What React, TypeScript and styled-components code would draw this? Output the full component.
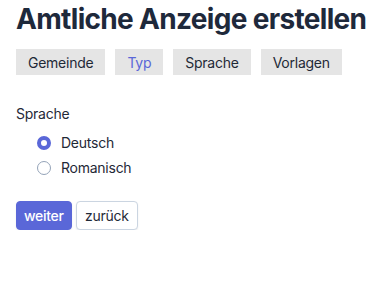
import React, { useState } from "react";
import styled, { createGlobalStyle } from "styled-components";

const Global = createGlobalStyle`
  html, body { margin: 0; padding: 0; background: #ffffff; }
  body { font-family: Inter, "Noto Sans", sans-serif; color: #1f2937; }
`;

const Page = styled.div`
  padding: 2px 16px 0;
  display: flex;
  flex-direction: column;
`;

const Title = styled.h1`
  margin: 0;
  font-size: 28px;
  font-weight: 700;
  line-height: 34px;
  color: #1e293b;
  letter-spacing: -0.68px;
  white-space: nowrap;
`;

const Tabs = styled.div`
  display: flex;
  gap: 10px;
  margin-top: 13px;
`;

const Tab = styled.button<{ $active?: boolean }>`
  height: 26px;
  padding: 0 12px;
  border: none;
  border-radius: 0;
  background: #e5e5e5;
  font-family: Inter, sans-serif;
  font-size: 14px;
  letter-spacing: -0.25px;
  color: ${(p) => (p.$active ? "#5a67d8" : "#1f2937")};
  cursor: pointer;
`;

const Fieldset = styled.div`
  margin-top: 30px;
  display: flex;
  flex-direction: column;
`;

const Label = styled.div`
  font-size: 14px;
  line-height: 17px;
  letter-spacing: -0.25px;
  color: #1f2937;
`;

const Options = styled.div`
  display: flex;
  flex-direction: column;
  gap: 8px;
  padding-left: 21px;
  margin-top: 12px;
`;

const Option = styled.label`
  display: flex;
  align-items: center;
  gap: 10px;
  font-size: 14px;
  line-height: 17px;
  letter-spacing: -0.25px;
  color: #1f2937;
  cursor: pointer;
`;

const RadioCircle = styled.span<{ $checked?: boolean }>`
  box-sizing: border-box;
  width: 14px;
  height: 14px;
  border-radius: 50%;
  border: ${(p) => (p.$checked ? "4px solid #5a67d8" : "1px solid #94a3b8")};
  background: #ffffff;
`;

const Actions = styled.div`
  display: flex;
  gap: 4px;
  margin-top: 25px;
`;

const Button = styled.button<{ $primary?: boolean }>`
  box-sizing: border-box;
  height: 29px;
  padding: 0 ${(p) => (p.$primary ? "7px" : "8.5px")};
  border-radius: 4px;
  font-family: Inter, sans-serif;
  font-size: 14px;
  letter-spacing: -0.3px;
  border: 1px solid ${(p) => (p.$primary ? "#5a67d8" : "#cbd5e1")};
  background: ${(p) => (p.$primary ? "#5a67d8" : "#ffffff")};
  color: ${(p) => (p.$primary ? "#ffffff" : "#1f2937")};
  font-weight: ${(p) => (p.$primary ? 500 : 400)};
  box-shadow: 0 1px 2px rgba(0, 0, 0, 0.08);
  cursor: pointer;
`;

export default function App() {
  const [lang, setLang] = useState("Deutsch");
  const tabs = ["Gemeinde", "Typ", "Sprache", "Vorlagen"];
  return (
    <>
      <Global />
      <Page>
        <Title>Amtliche Anzeige erstellen</Title>
        <Tabs>
          {tabs.map((t) => (
            <Tab key={t} $active={t === "Typ"}>
              {t}
            </Tab>
          ))}
        </Tabs>
        <Fieldset>
          <Label>Sprache</Label>
          <Options>
            {["Deutsch", "Romanisch"].map((l) => (
              <Option key={l} onClick={() => setLang(l)}>
                <RadioCircle $checked={lang === l} />
                {l}
              </Option>
            ))}
          </Options>
        </Fieldset>
        <Actions>
          <Button $primary>weiter</Button>
          <Button>zurück</Button>
        </Actions>
      </Page>
    </>
  );
}
